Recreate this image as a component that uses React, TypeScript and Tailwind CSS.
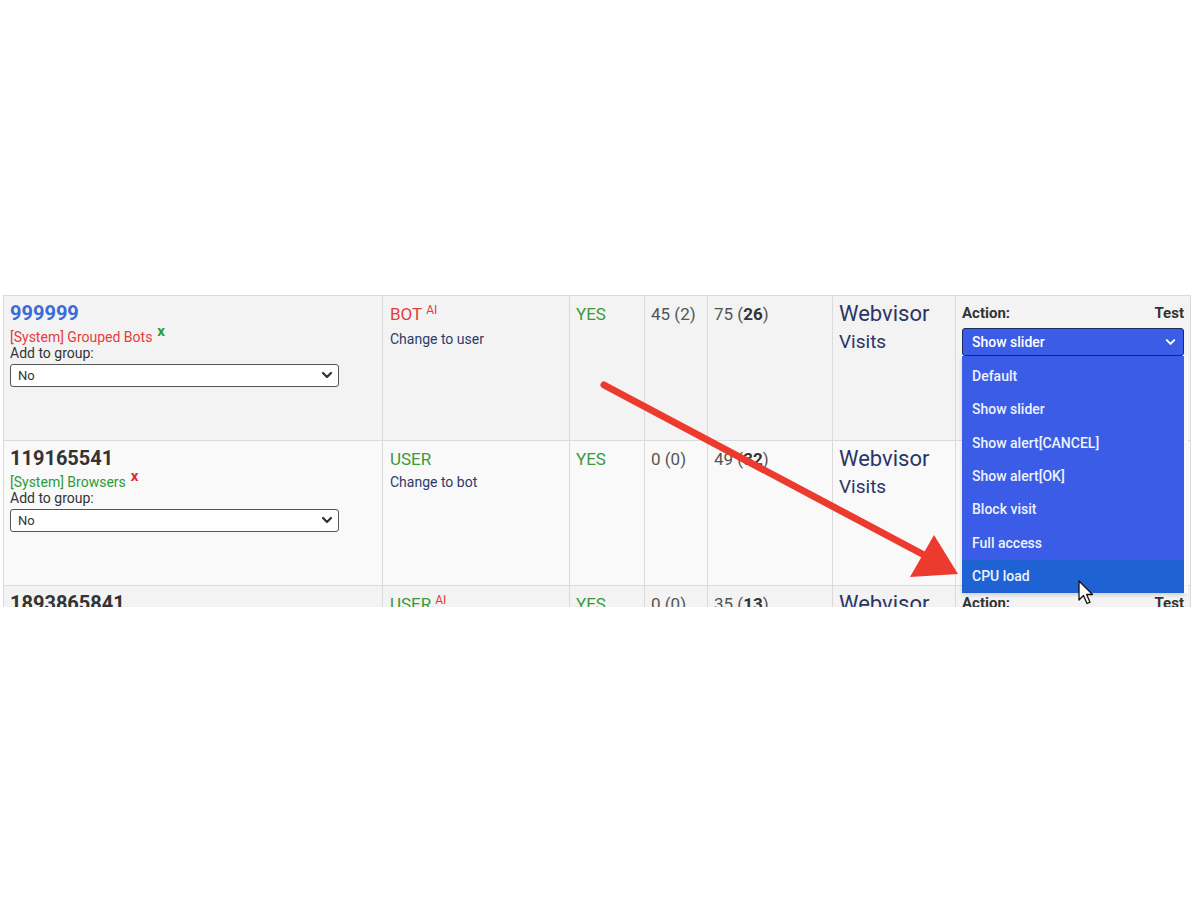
import { ChevronDown } from 'lucide-react'

type Row = {
  id: string
  idColor: string
  group: string
  groupColor: string
  markColor: string
  kind: 'BOT' | 'USER'
  ai: boolean
  change: string
  hits: string
  visits: number
  uniq: number
  bg: string
}

const ROWS: Row[] = [
  {
    id: '999999',
    idColor: 'text-[#3b6bd6]',
    group: '[System] Grouped Bots',
    groupColor: 'text-[#e53c3c]',
    markColor: 'text-[#2e9a3a]',
    kind: 'BOT',
    ai: true,
    change: 'Change to user',
    hits: '45 (2)',
    visits: 75,
    uniq: 26,
    bg: 'bg-[#f3f3f3]',
  },
  {
    id: '119165541',
    idColor: 'text-[#333333]',
    group: '[System] Browsers',
    groupColor: 'text-[#2e9a3a]',
    markColor: 'text-[#e0283a]',
    kind: 'USER',
    ai: false,
    change: 'Change to bot',
    hits: '0 (0)',
    visits: 49,
    uniq: 32,
    bg: 'bg-[#f9f9f9]',
  },
  {
    id: '1893865841',
    idColor: 'text-[#333333]',
    group: '[System] Browsers',
    groupColor: 'text-[#2e9a3a]',
    markColor: 'text-[#e0283a]',
    kind: 'USER',
    ai: true,
    change: 'Change to bot',
    hits: '0 (0)',
    visits: 35,
    uniq: 13,
    bg: 'bg-[#f3f3f3]',
  },
]

const ACTIONS = ['Default', 'Show slider', 'Show alert[CANCEL]', 'Show alert[OK]', 'Block visit', 'Full access', 'CPU load']

function GroupSelect() {
  return (
    <div className="relative mt-[2px] w-[329px]">
      <select
        defaultValue="no"
        className="w-full h-[23px] pl-[7px] pr-6 rounded-[3px] border border-[#555] bg-white text-[13px] text-[#333] appearance-none"
      >
        <option value="no">No</option>
      </select>
      <ChevronDown size={16} strokeWidth={3.4} className="absolute right-[4px] top-1/2 -translate-y-1/2 text-[#333] pointer-events-none" />
    </div>
  )
}

function ActionSelect() {
  return (
    <div className="relative mt-[3px]">
      <select
        defaultValue="Show slider"
        className="w-full h-[28px] pl-[9px] pr-6 rounded-[3px] border border-[#1d2b5c] bg-[#3a5ce6] text-[14px] font-medium text-white appearance-none"
      >
        {ACTIONS.map(a => <option key={a} value={a}>{a}</option>)}
      </select>
      <ChevronDown size={15} strokeWidth={3.2} className="absolute right-[6px] top-1/2 -translate-y-1/2 text-white pointer-events-none" />
    </div>
  )
}

function TableRow({ row }: { row: Row }) {
  const kindColor = row.kind === 'BOT' ? 'text-[#e53c3c]' : 'text-[#3a9a3a]'
  return (
    <div className={`grid grid-cols-[379px_187px_75px_63px_125px_123px_235px] h-[145px] border-b border-[#dadada] ${row.bg}`}>
      <div className="border-r border-[#dadada] pt-[5px] px-[6px]">
        <div className={`text-[20px] leading-[24px] font-bold ${row.idColor}`}>{row.id}</div>
        <div className="mt-[4px] text-[14px] leading-[16px]">
          <span className={row.groupColor}>{row.group}</span>
          <span className={`relative -top-[6px] ml-[5px] text-[15px] font-bold ${row.markColor}`}>x</span>
        </div>
        <div className="text-[14px] leading-[16px] text-[#333]">Add to group:</div>
        <GroupSelect />
      </div>

      <div className="border-r border-[#dadada] pt-[5px] px-[7px]">
        <div className={`text-[17px] leading-[26px] ${kindColor}`}>
          {row.kind}
          {row.ai && <span className="relative -top-[6px] ml-[4px] text-[12px] text-[#e53c3c]">AI</span>}
        </div>
        <div className="mt-[2px] text-[14px] leading-[16px] text-[#2d3a6b]">{row.change}</div>
      </div>

      <div className="border-r border-[#dadada] pt-[5px] px-[6px] text-[17px] leading-[26px] text-[#3a9a3a]">YES</div>

      <div className="border-r border-[#dadada] pt-[5px] px-[6px] text-[17px] leading-[26px] text-[#555]">{row.hits}</div>

      <div className="border-r border-[#dadada] pt-[5px] px-[6px] text-[17px] leading-[26px] text-[#555]">
        {row.visits} (<b className="text-[#333]">{row.uniq}</b>)
      </div>

      <div className="border-r border-[#dadada] pt-[5px] px-[6px] text-[#2b3566]">
        <div className="text-[22px] leading-[26px]">Webvisor</div>
        <div className="text-[19px] leading-[30px]">Visits</div>
      </div>

      <div className="border-r border-[#dadada] pt-[5px] px-[6px]">
        <div className="flex justify-between text-[15px] leading-[24px] font-bold text-[#333]">
          <span>Action:</span>
          <span>Test</span>
        </div>
        <ActionSelect />
      </div>
    </div>
  )
}

export default function App() {
  return (
    <div className="w-[1200px] h-[900px] bg-white pt-[295px] font-['Roboto',sans-serif]">
      <div className="relative ml-[3px] w-[1188px] h-[312px] overflow-hidden border-l border-t border-[#dadada]">
        {ROWS.map(r => <TableRow key={r.id} row={r} />)}

        {/* open action list of the first row, covers the row below */}
        <div className="absolute left-[958px] top-[60px] w-[222px] h-[237px] pt-[4px] bg-[#3a5ce6] shadow-[4px_0_0_#f9f9f9,0_2px_4px_rgba(0,0,0,0.15)]">
          {ACTIONS.map(a => (
            <div
              key={a}
              className={`h-[33.3px] flex items-center pl-[10px] text-[14px] font-medium text-[#eef2ff] ${a === 'CPU load' ? 'bg-[#1f62d3]' : ''}`}
            >
              {a}
            </div>
          ))}
        </div>

        {/* mouse pointer */}
        <svg className="absolute left-[1074px] top-[284px]" width="18" height="26" viewBox="0 0 18 26">
          <path d="M1 1 L1 20 L5.5 15.5 L9 23.5 L12 22.2 L8.6 14.5 L14.5 14.5 Z" fill="#fff" stroke="#111" strokeWidth="1.3" strokeLinejoin="round" />
        </svg>
      </div>

      {/* callout arrow */}
      <svg className="absolute left-0 top-0 pointer-events-none" width="1200" height="900">
        <line x1="604" y1="385" x2="926" y2="556" stroke="#ec3a2e" strokeWidth="7" strokeLinecap="round" />
        <polygon points="958,574 934,535 910,577" fill="#ec3a2e" />
      </svg>
    </div>
  )
}
